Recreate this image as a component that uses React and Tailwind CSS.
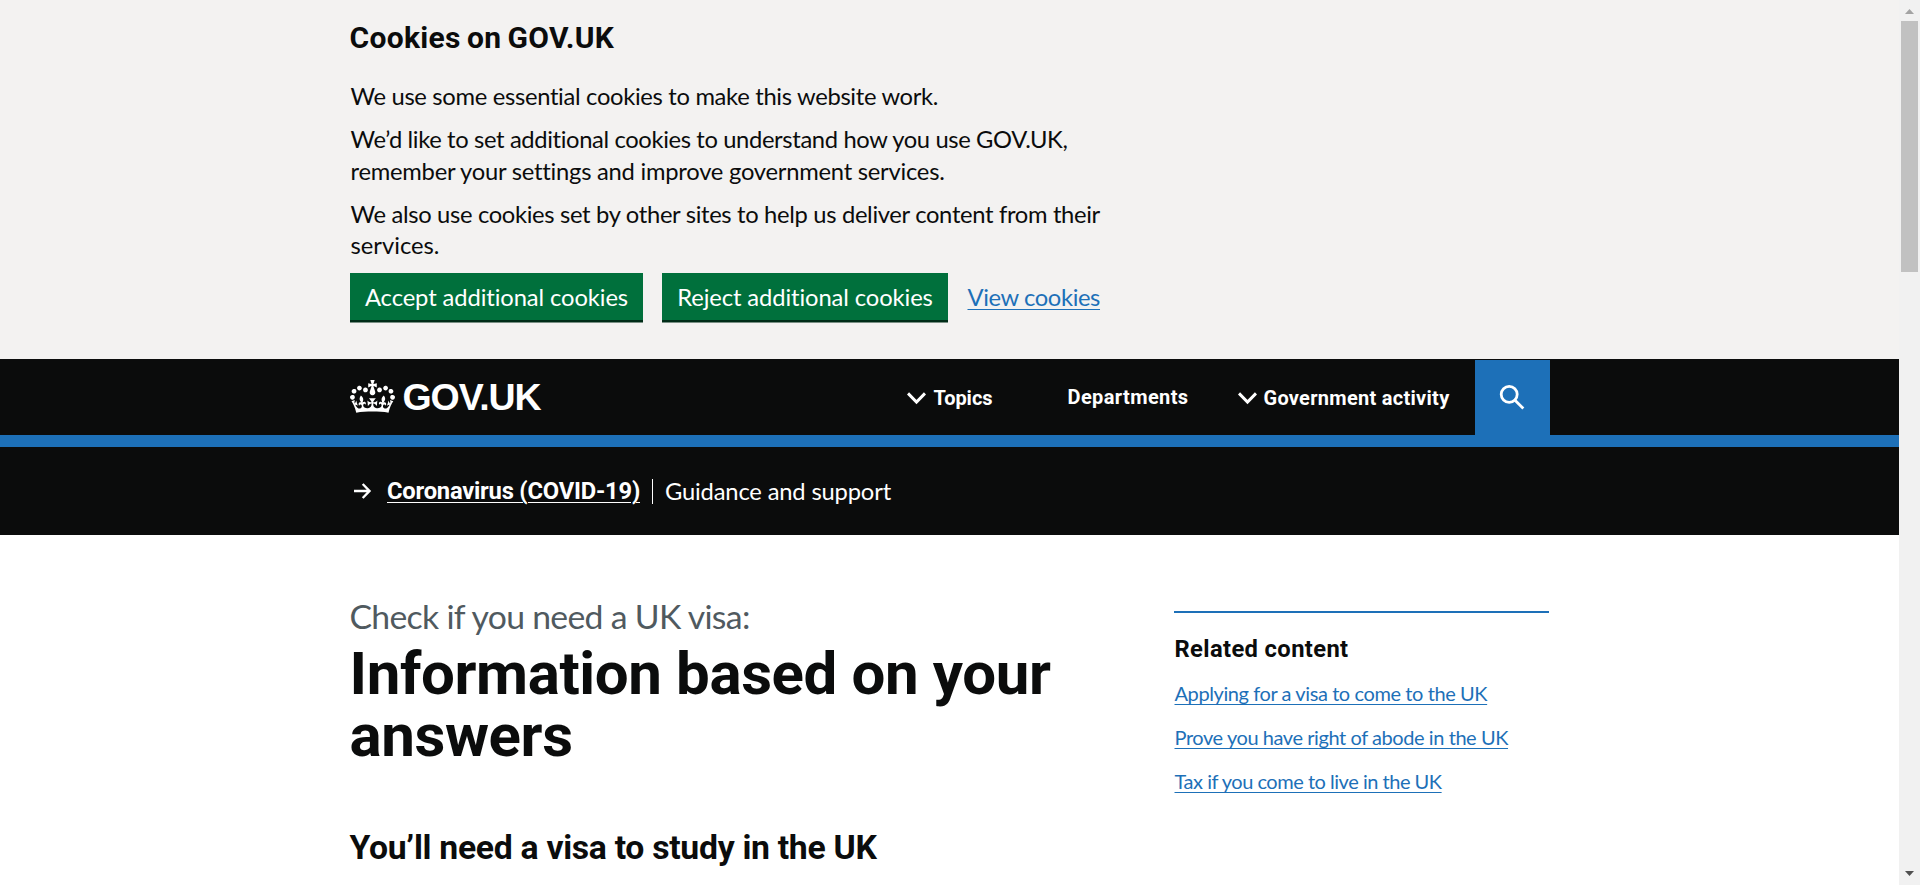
import React from "react";

const REGULAR = "font-['Lato',sans-serif] font-normal";
const BOLD = "font-['Roboto',sans-serif] font-bold";

function Crown() {
  return (
    <svg className="mt-[20.5px] h-[33px] w-[45px] shrink-0" viewBox="0 0 132 97" fill="#fff" aria-hidden="true">
      <path
        fillRule="evenodd"
        d="M25 30.2c3.5 1.5 7.7-.2 9.1-3.7 1.5-3.6-.2-7.8-3.9-9.2-3.6-1.4-7.6.3-9.1 3.9-1.4 3.5.3 7.5 3.9 9zM9 39.5c3.6 1.5 7.8-.2 9.2-3.7 1.5-3.6-.2-7.8-3.9-9.1-3.6-1.5-7.6.2-9.1 3.8-1.4 3.5.3 7.5 3.8 9zM4.4 57.2c3.5 1.5 7.7-.2 9.1-3.8 1.5-3.6-.2-7.7-3.9-9.1-3.5-1.5-7.6.3-9.1 3.8-1.4 3.5.3 7.6 3.9 9.1zm38.3-21.4c3.5 1.5 7.7-.2 9.1-3.8 1.5-3.6-.2-7.7-3.9-9.1-3.6-1.5-7.6.3-9.1 3.8-1.3 3.6.4 7.7 3.9 9.1zm64.4-5.6c-3.6 1.5-7.8-.2-9.1-3.7-1.5-3.6.2-7.8 3.8-9.2 3.6-1.4 7.7.3 9.2 3.9 1.3 3.5-.4 7.5-3.9 9zm15.9 9.3c-3.6 1.5-7.7-.2-9.1-3.7-1.5-3.6.2-7.8 3.7-9.1 3.6-1.5 7.7.2 9.2 3.8 1.5 3.5-.3 7.5-3.8 9zm4.7 17.7c-3.6 1.5-7.8-.2-9.2-3.8-1.5-3.6.2-7.7 3.9-9.1 3.6-1.5 7.7.3 9.2 3.8 1.3 3.5-.4 7.6-3.9 9.1zM89.3 35.8c-3.6 1.5-7.8-.2-9.2-3.8-1.4-3.6.2-7.7 3.9-9.1 3.6-1.5 7.7.3 9.2 3.8 1.4 3.6-.3 7.7-3.9 9.1zM69.7 17.7l8.9 4.7V9.3l-8.9 2.8c-.2-.3-.5-.6-.9-.9L72.4 0H59.6l3.5 11.2c-.3.3-.6.5-.9.9l-8.8-2.8v13.1l8.8-4.7c.3.3.6.7.9.9l-5 15.4v.1c-.2.8-.4 1.6-.4 2.4 0 4.1 3.1 7.5 7 8.1h.2c.3 0 .7.1 1 .1.4 0 .7 0 1-.1h.2c4-.6 7.1-4.1 7.1-8.1 0-.8-.1-1.7-.4-2.4V34l-5.1-15.4c.4-.2.7-.6 1-.9zM66 92.8c16.9 0 32.8 1.1 47.1 3.2 4-16.9 8.9-26.7 14-33.5l-9.6-3.4c1 4.9 1.1 7.2 0 10.2-1.5-1.4-3-4.3-4.2-8.7L108.6 76c2.8-2 5-3.2 7.5-3.3-4.4 9.4-10 11.9-13.6 11.2-4.3-.8-6.3-4.6-5.6-7.9 1-4.7 5.7-5.9 8-.5 4.3-8.7-3-11.4-7.6-8.8 7.1-7.2 7.9-13.5 2.1-21.1-8 6.1-8.1 12.3-4.5 20.8-4.7-5.4-12.1-2.5-9.5 6.2 3.4-5.2 7.9-2 7.2 3.1-.6 4.3-6.4 7.8-13.5 7.2-10.3-.9-10.9-8-11.2-13.8 2.5-.5 7.1 1.8 11 7.3L80.2 60c-4.1 4.4-8 5.3-12.3 5.4 1.4-4.4 8-11.6 8-11.6H55.5s6.4 7.2 7.9 11.6c-4.2-.1-8-1-12.3-5.4l1.4 16.4c3.9-5.5 8.5-7.7 10.9-7.3-.3 5.8-.9 12.8-11.1 13.8-7.2.6-12.9-2.9-13.5-7.2-.7-5 3.8-8.3 7.1-3.1 2.7-8.7-4.6-11.6-9.4-6.2 3.7-8.5 3.6-14.7-4.6-20.8-5.8 7.6-5 13.9 2.2 21.1-4.7-2.6-11.9.1-7.7 8.8 2.3-5.5 7.1-4.2 8.1.5.7 3.3-1.3 7.1-5.7 7.9-3.5.7-9-1.8-13.5-11.2 2.5.1 4.7 1.3 7.5 3.3l-4.7-15.4c-1.2 4.4-2.7 7.2-4.3 8.7-1.1-3-.9-5.3 0-10.2l-9.5 3.4c5 6.9 9.9 16.7 14 33.5 14.8-2.1 30.8-3.2 47.7-3.2z"
      />
    </svg>
  );
}

function Chevron() {
  return (
    <svg className="mt-[33px] h-[13px] w-[19px] shrink-0" viewBox="0 0 19 13" fill="none" stroke="#fff" strokeWidth="3">
      <path d="M1 1.400 9.500 10 18 1.400" />
    </svg>
  );
}

function CookieBanner() {
  return (
    <section className="h-[359px] bg-[#f3f2f1] pt-[18px]">
      <div className="mx-auto w-[1200px]">
        <h2 className={`${BOLD} text-[30px] leading-[40px] tracking-[0.010em] [word-spacing:-0.050em]`}>Cookies on GOV.UK</h2>
        <div className={`${REGULAR} mt-[23px] pl-px text-[23.75px] leading-[31.25px] whitespace-nowrap`}>
          <p className="tracking-[-0.0130em]">We use some essential cookies to make this website work.</p>
          <p className="mt-3 tracking-[-0.0152em]">
            We’d like to set additional cookies to understand how you use GOV.UK,
            <br />
            <span className="tracking-[-0.0101em]">remember your settings and improve government services.</span>
          </p>
          <p className="mt-3 tracking-[-0.0136em]">
            We also use cookies set by other sites to help us deliver content from their
            <br />
            <span className="tracking-[0em]">services.</span>
          </p>
        </div>
        <div className={`${REGULAR} mt-[11.5px] flex items-start text-[23.75px] leading-[47px] tracking-[-0.004em] whitespace-nowrap`}>
          <button className="h-[47px] w-[293px] bg-[#00703c] pt-px pl-px text-white shadow-[0_2.5px_0_#002d18]">Accept additional cookies</button>
          <button className="ml-[19px] h-[47px] w-[286px] bg-[#00703c] pt-px pl-px text-white shadow-[0_2.5px_0_#002d18]">Reject additional cookies</button>
          <a href="#cookies" className="mt-px ml-5 tracking-[-0.0161em] text-[#1d70b8] underline decoration-1 underline-offset-[3px]">
            View cookies
          </a>
        </div>
      </div>
    </section>
  );
}

function Header() {
  return (
    <header className="h-[88px] border-b-12 border-[#1d70b8] bg-[#0b0c0c] text-white">
      <div className="mx-auto flex h-[76px] w-[1200px] items-start whitespace-nowrap">
        <Crown />
        <span className="ml-2 w-[145px] font-['Liberation_Sans',sans-serif] text-[37.5px] leading-[76px] font-bold tracking-[-0.029em]">
          GOV.UK
        </span>
        <nav className={`${BOLD} ml-[359px] flex grow items-start text-[20px] leading-[78px]`}>
          <span className="flex w-[161px] items-start">
            <Chevron />
            <span className="ml-2 tracking-[-0.002em]">Topics</span>
          </span>
          <span className="w-[170px] leading-[76px] tracking-[0.0195em]">Departments</span>
          <span className="flex items-start">
            <Chevron />
            <span className="ml-[7px] tracking-[0.0141em]">Government activity</span>
          </span>
        </nav>
        <button className="mt-px h-[75px] w-[75px] bg-[#1d70b8]" aria-label="Search">
          <svg className="h-[75px] w-[75px]" viewBox="0 0 75 75" fill="none" stroke="#fff" strokeWidth="2.8">
            <circle cx="34.2" cy="34.3" r="8" />
            <path d="M40 40.2 48.3 48.5" />
          </svg>
        </button>
      </div>
    </header>
  );
}

function CovidBar() {
  return (
    <div className="h-[88px] bg-[#0b0c0c] text-white">
      <div className="mx-auto flex w-[1200px] items-start text-[23.75px] whitespace-nowrap">
        <svg className="mt-[36px] ml-[4px] h-4 w-[18px]" viewBox="0 0 18 16" fill="none" stroke="#fff" strokeWidth="2.4">
          <path d="M0 8H15.500M8.700 1 15.500 8l-6.800 7" />
        </svg>
        <a href="#covid" className={`${BOLD} ml-[15.500px] w-[229px] leading-[88px] tracking-[-0.0091em] underline decoration-1 underline-offset-[3px]`}>
          Coronavirus (COVID-19)
        </a>
        <span className={`${REGULAR} mt-8 ml-[36px] h-[25px] border-l border-white pl-[12px] leading-[25px] tracking-[-0.0072em]`}>
          Guidance and support
        </span>
      </div>
    </div>
  );
}

function Related() {
  return (
    <aside className="mt-[76px] mr-px w-[375px] border-t-2 border-[#1d70b8] whitespace-nowrap">
      <h2 className={`${BOLD} mt-[21px] pl-px text-[23.75px] leading-[31px] tracking-[0.0155em]`}>Related content</h2>
      <ul className={`${REGULAR} mt-[16px] flex flex-col gap-[19px] pl-px text-[20px] leading-[25px] text-[#1d70b8]`}>
        <li className="tracking-[-0.0205em]">
          <a href="#apply" className="underline decoration-1 underline-offset-[3px] [text-decoration-skip-ink:none]">Applying for a visa to come to the UK</a>
        </li>
        <li className="tracking-[-0.0215em]">
          <a href="#abode" className="underline decoration-1 underline-offset-[3px] [text-decoration-skip-ink:none]">Prove you have right of abode in the UK</a>
        </li>
        <li className="tracking-[-0.0240em]">
          <a href="#tax" className="underline decoration-1 underline-offset-[3px] [text-decoration-skip-ink:none]">Tax if you come to live in the UK</a>
        </li>
      </ul>
    </aside>
  );
}

function Scrollbar() {
  return (
    <div className="flex h-full w-[21px] shrink-0 flex-col items-center bg-[#f1f1f1]">
      <svg className="h-[21px] w-[21px] shrink-0" viewBox="0 0 21 21" fill="#a3a3a3">
        <path d="M6 14h9l-4.500-5z" />
      </svg>
      <div className="h-[251px] w-[17px] bg-[#c1c1c1]" />
      <svg className="mt-auto h-[21px] w-[21px] shrink-0" viewBox="0 0 21 21" fill="#505050">
        <path d="M6 7h9l-4.500 5z" />
      </svg>
    </div>
  );
}

export default function App() {
  return (
    <div className="flex h-[885px] w-[1920px] overflow-hidden bg-white text-[#0b0c0c]">
      <div className="w-[1899px] shrink-0">
        <CookieBanner />
        <Header />
        <CovidBar />
        <main className="mx-auto flex w-[1200px] items-start justify-between whitespace-nowrap">
          <div className="pt-[61px]">
            <p className={`${REGULAR} text-[33.75px] leading-[40px] tracking-[-0.0205em] text-[#505a5f]`}>Check if you need a UK visa:</p>
            <h1 className={`${BOLD} mt-[7px] text-[60px] leading-[62px] tracking-[-0.0064em]`}>
              Information based on your
              <br />
              answers
            </h1>
            <h2 className={`${BOLD} mt-[61px] text-[33.75px] leading-[40px] tracking-[-0.009em]`}>You’ll need a visa to study in the UK</h2>
          </div>
          <Related />
        </main>
      </div>
      <Scrollbar />
    </div>
  );
}
